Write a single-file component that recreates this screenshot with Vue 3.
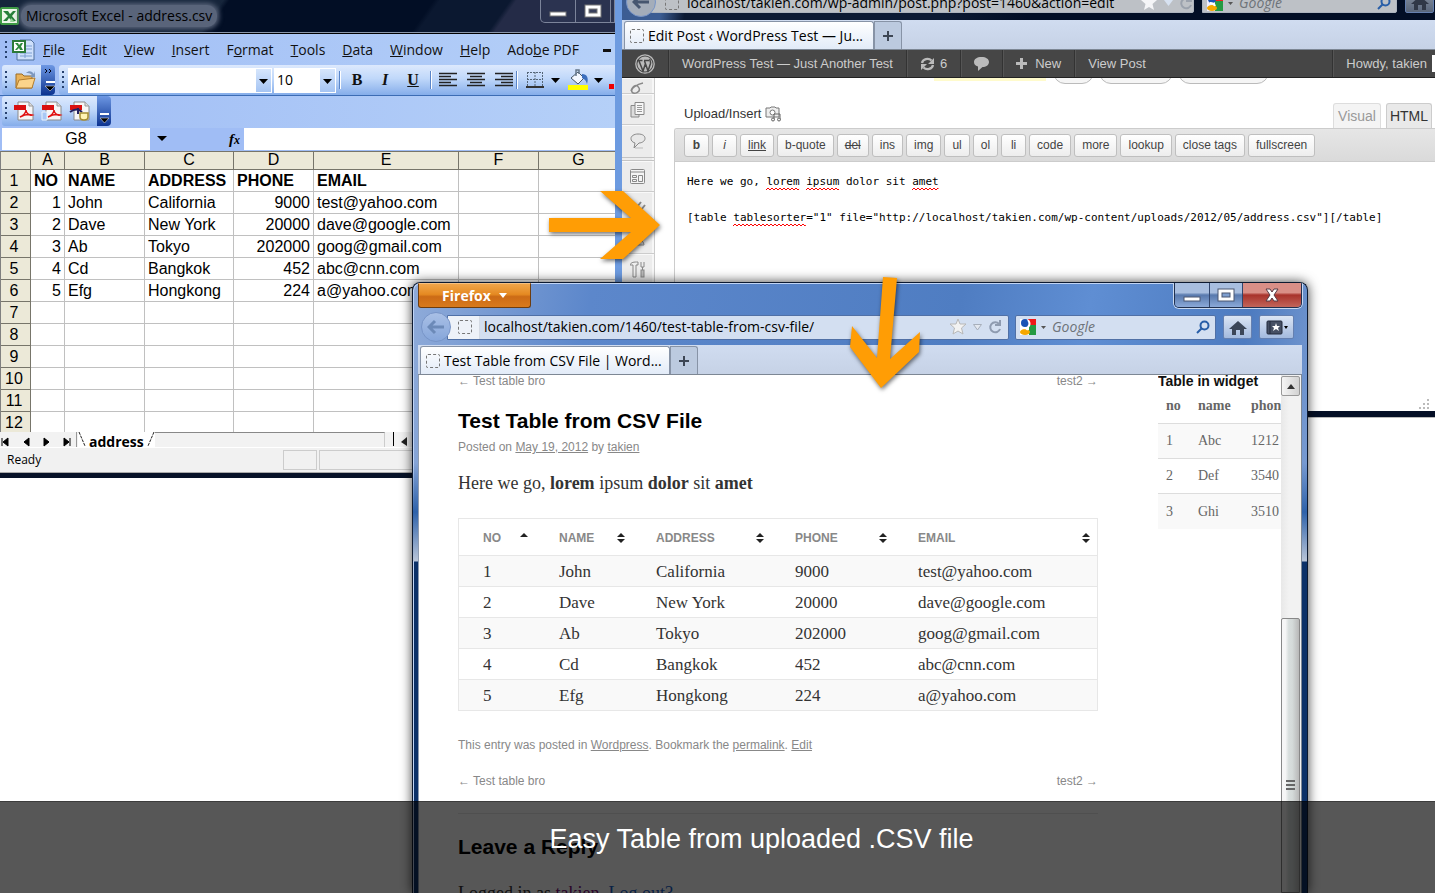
<script setup>
import { ref } from 'vue'

const menus = [
  ['', 'F', 'ile'], ['', 'E', 'dit'], ['', 'V', 'iew'], ['', 'I', 'nsert'], ['F', 'o', 'rmat'],
  ['', 'T', 'ools'], ['', 'D', 'ata'], ['', 'W', 'indow'], ['', 'H', 'elp'], ['Ado', 'b', 'e PDF'],
]
const letters = ['A', 'B', 'C', 'D', 'E', 'F', 'G']
const people = [
  ['1', 'John', 'California', '9000', 'test@yahoo.com'],
  ['2', 'Dave', 'New York', '20000', 'dave@google.com'],
  ['3', 'Ab', 'Tokyo', '202000', 'goog@gmail.com'],
  ['4', 'Cd', 'Bangkok', '452', 'abc@cnn.com'],
  ['5', 'Efg', 'Hongkong', '224', 'a@yahoo.com'],
]
const heads = ['NO', 'NAME', 'ADDRESS', 'PHONE', 'EMAIL']
const sheet = [heads, ...people, [], [], [], [], [], []]
const widget = [['1', 'Abc', '1212'], ['2', 'Def', '3540'], ['3', 'Ghi', '3510']]
const tags = ['b', 'i', 'link', 'b-quote', 'del', 'ins', 'img', 'ul', 'ol', 'li', 'code', 'more', 'lookup', 'close tags', 'fullscreen']

const cell = ref('G8')
const formula = ref('')
const adminUrl = ref('localhost/takien.com/wp-admin/post.php?post=1460&action=edit')
const siteUrl = ref('localhost/takien.com/1460/test-table-from-csv-file/')
const post = ref('Here we go, lorem ipsum dolor sit amet\n\n[table tablesorter="1" file="http://localhost/takien.com/wp-content/uploads/2012/05/address.csv"][/table]')
// Misspelt words in the editor: line, first column, length
const typos = [[0, 12, 5], [0, 18, 5], [0, 34, 4], [2, 7, 11]]
</script>

<template>
  <div class="desktop">
    <div class="back-row">
      <section class="excel" aria-label="Microsoft Excel">
        <header class="xl-title">
          <svg class="xl-logo" width="20" height="20" viewBox="0 0 20 20"><rect x="0" y="1" width="19" height="18" rx="2" fill="#3f9a45" /><rect x="2" y="3" width="15" height="14" fill="#eef7ea" /><path d="M3 5h5l2 3 3-3h3l-4 5 4 5h-4l-3-3-2 3H3l5-5z" fill="#27803a" /><path d="M11 12l4 4h-5z" fill="#9ad49a" /></svg>
          <h2>Microsoft Excel - address.csv</h2>
          <div class="xl-ctl">
            <button aria-label="Minimize Excel"><svg width="18" height="12"><rect x="1" y="7" width="16" height="4" fill="#fff" stroke="#777" /></svg></button>
            <button aria-label="Maximize Excel"><svg width="18" height="14"><rect x="1" y="1" width="16" height="12" fill="#fff" stroke="#777" /><rect x="5" y="5" width="8" height="4" fill="#39405c" stroke="#777" /></svg></button>
            <button aria-label="Close Excel"></button>
          </div>
        </header>
        <nav class="xl-menu">
          <i class="grip"></i>
          <svg width="23" height="22" viewBox="0 0 23 22"><path d="M8 1h11l3 3v17H5V12z" fill="#cfe0fb" stroke="#51719e" /><path d="M14 7h6M14 10h6M8 14h12M8 17h12M13 12v7" stroke="#7d9fd2" /><rect x="1" y="2" width="12" height="11" fill="#fff" stroke="#2c7a3a" stroke-width="2" /><path d="M3 4h3l1 2 2-2h2L9 7.500l2 3.500H8L7 9l-2 2H3l3-3.500z" fill="#2c8a3c" /></svg>
          <button v-for="m in menus" :key="m[2]">{{ m[0] }}<u>{{ m[1] }}</u>{{ m[2] }}</button>
          <button class="xl-dash" aria-label="Minimize workbook"></button>
        </nav>
        <div class="xl-bar">
          <div class="strip">
            <i class="grip"></i>
            <button aria-label="Open"><svg width="24" height="22" viewBox="0 0 24 22"><path d="M2 5h6l2 2h8v12H2z" fill="#e9b35a" stroke="#9b6c24" /><path d="M5 11l16-2-3 10H2z" fill="#fbd48b" stroke="#b27c2c" /><path d="M12 4c3-3 6-2 8 1l1-3v6h-5l2-2c-2-2-4-2-6-2" fill="#7c97bd" /></svg></button>
          </div>
          <div class="cap"><svg width="14" height="28"><path d="M4 4l2 2-2 2M8 4l2 2-2 2" fill="none" stroke="#001" /><path d="M5 17h9" stroke="#fff" stroke-width="2" /><path d="M4 21h10l-5 5z" fill="#000" stroke="#fff" stroke-width=".5" /></svg></div>
          <div class="strip fmt">
            <i class="grip"></i>
            <span class="combo font"><select aria-label="Font"><option>Arial</option></select><svg width="15" height="23"><path d="M3 10h9l-4.500 5z" /></svg></span>
            <span class="combo size"><select aria-label="Font size"><option>10</option></select><svg width="15" height="23"><path d="M3 10h9l-4.500 5z" /></svg></span>
            <i class="sep"></i>
            <button class="biu bold">B</button><button class="biu ital">I</button><button class="biu und">U</button>
            <i class="sep"></i>
            <button class="al" aria-label="Align left"><svg width="18" height="16"><path d="M0 1.500h18M0 4.500h12M0 7.500h18M0 10.500h12M0 13.500h18" stroke="#222" stroke-width="1.500" /></svg></button>
            <button class="al" aria-label="Center"><svg width="18" height="16"><path d="M0 1.500h18M3 4.500h12M0 7.500h18M3 10.500h12M0 13.500h18" stroke="#222" stroke-width="1.500" /></svg></button>
            <button class="al" aria-label="Align right"><svg width="18" height="16"><path d="M0 1.500h18M6 4.500h12M0 7.500h18M6 10.500h12M0 13.500h18" stroke="#222" stroke-width="1.500" /></svg></button>
            <i class="sep"></i>
            <button class="al wide" aria-label="Borders"><svg width="34" height="18"><path d="M1 1.500h16M1 8.500h16M1.500 1v14M9 1v14M16.500 1v14" stroke="#567" stroke-dasharray="2 1" fill="none" /><path d="M0 16h18" stroke="#333" stroke-width="2" /><path d="M25 7h9l-4.500 5z" /></svg></button>
            <button class="al wide" aria-label="Fill color"><svg width="35" height="22"><path d="M3 9l7-6 6 6-6 6z" fill="#f4f8ff" stroke="#456" /><path d="M8 7V1h3v4" fill="none" stroke="#678" stroke-width="1.500" /><path d="M14 5c5 0 7 4 5 10-1-4-3-5-5-6z" fill="#3c6fbd" /><rect y="16" width="20" height="5" fill="#ff0" /><path d="M26 9h9l-4.500 5z" /></svg></button>
            <i class="red"></i>
          </div>
        </div>
        <div class="xl-bar second">
          <div class="strip pdf">
            <i class="grip"></i>
            <button v-for="n in 3" :key="n" :aria-label="'Convert to PDF ' + n"><svg width="22" height="20" viewBox="0 0 22 20"><path d="M5 1h11l4 4v14H5z" fill="#f6f6f6" stroke="#8a8a8a" /><path d="M16 1v4h4" fill="#ddd" stroke="#999" /><rect x="1" y="4" width="12" height="5" fill="#d90f0f" /><template v-if="n < 3"><path d="M7 16c3-1 6-4 6-7 0 3 3 6 6 5-4-1-8 0-12 2z" fill="none" stroke="#e01212" stroke-width="1.500" /><path v-if="n === 2" d="M1 11h5v8H1z" fill="#a9c8f5" stroke="#e9f1fc" /></template><template v-else><path d="M1 11c4-3 8-4 12 0M9 7v6" stroke="#22205e" stroke-width="2" fill="none" /><path d="M11 12h8v4c0 4-8 4-8 0z" fill="#fff4b4" stroke="#a48d30" stroke-width="1.500" /></template></svg></button>
          </div>
          <div class="cap"><svg width="14" height="28"><path d="M3 18h9" stroke="#fff" stroke-width="2" /><path d="M3 22h9l-4.500 5z" fill="#000" stroke="#fff" stroke-width=".5" /></svg></div>
        </div>
        <div class="xl-formula">
          <input v-model="cell" class="namebox" aria-label="Name box">
          <button aria-label="Cell list"><svg width="10" height="6"><path d="M0 0h10L5 5z" /></svg></button>
          <span class="fx">f<small>x</small></span>
          <input v-model="formula" class="fbox" aria-label="Formula">
        </div>
        <div class="sheet">
          <table>
            <colgroup><col class="k0"><col class="k1"><col class="k2"><col class="k3"><col class="k2"><col class="k4"><col class="k2"><col class="k2"></colgroup>
            <thead><tr><th></th><th v-for="l in letters" :key="l">{{ l }}</th></tr></thead>
            <tbody>
              <tr v-for="(r, n) in sheet" :key="n" :class="{ strong: n === 0 }">
                <th>{{ n + 1 }}</th>
                <td v-for="(l, c) in letters" :key="l" :class="{ num: n > 0 && (c === 0 || c === 3) }">{{ r[c] }}</td>
              </tr>
            </tbody>
          </table>
        </div>
        <div class="xl-tabs">
          <svg width="78" height="15"><path d="M2 6v8M3 10l5-4v8zM24 10l5-4v8zM49 10l-5-4v8zM69 10l-5-4v8zM70 6v8" fill="#000" stroke="#000" /><path d="M76.500 0v15" stroke="#999" /></svg>
          <span class="stab"><svg width="8" height="15"><path d="M1 0l6 14" stroke="#222" stroke-dasharray="3 1" /></svg><b>address</b><svg width="8" height="15"><path d="M7 0L1 14" stroke="#222" stroke-dasharray="3 1" /></svg></span>
          <span class="hscroll"></span>
          <svg width="28" height="15"><path d="M8.500 0v14" stroke="#000" /><path d="M16 10l6-5v9z" fill="#222" /></svg>
        </div>
        <footer class="xl-status"><span>Ready</span><i></i><i class="long"></i></footer>
      </section>

      <section class="wp" aria-label="WordPress editor">
        <div class="wp-nav">
          <button class="round" aria-label="Back in editor"><svg width="18" height="16" viewBox="0 0 18 16"><path d="M8 2L2 8l6 6M2 8h15" fill="none" stroke="#46566f" stroke-width="3" /></svg></button>
          <div class="url"><i class="dots"></i><input v-model="adminUrl" aria-label="Editor address"><svg width="52" height="18" viewBox="0 0 52 18"><path d="M8 1l2 5h6l-4.500 4L13 16l-5-3-5 3 1.500-6L0 6h6z" fill="#f4f5f7" /><path d="M23 6h9l-4.500 6z" fill="#d7e2f1" /><path d="M49 6a5 5 0 1 0 1 5M50 2v5h-5" stroke="#9ba2ad" stroke-width="2" fill="none" /></svg></div>
          <div class="search"><svg width="28" height="16" viewBox="0 0 28 16"><rect width="16" height="16" fill="#eef" /><rect x="8" width="8" height="6" fill="#e22" /><rect x="8" y="6" width="8" height="10" fill="#259a42" /><circle cx="5" cy="4" r="4" fill="#1853b5" /><ellipse cx="5" cy="13" rx="5" ry="3" fill="#f5a800" /><path d="M3 8q4 0 5 3" stroke="#fff" fill="none" stroke-width="2" /><path d="M21 7h5l-2.500 3z" fill="#555" /></svg><input placeholder="Google" aria-label="Search in editor"><svg width="14" height="14" viewBox="0 0 14 14"><circle cx="8.500" cy="5.500" r="4" fill="none" stroke="#285ea8" stroke-width="2" /><path d="M6 8l-5 5" stroke="#285ea8" stroke-width="2" /></svg></div>
          <button class="sq" aria-label="Home in editor"><svg width="18" height="15" viewBox="0 0 18 15"><path d="M9 1L0 9h3v6h4v-5h4v5h4V9h3z" fill="#303847" /></svg></button>
        </div>
        <div class="tabs">
          <button class="tab"><i class="dots"></i>Edit Post ‹ WordPress Test — Ju...</button>
          <button class="plus" aria-label="New editor tab"><svg width="12" height="12"><path d="M6 1v10M1 6h10" stroke="#3d4654" stroke-width="2" /></svg></button>
        </div>
        <nav class="adminbar">
          <a href="#" class="logo" aria-label="WordPress"><svg width="20" height="20" viewBox="0 0 20 20"><circle cx="10" cy="10" r="9.200" fill="none" stroke="#bbb" stroke-width="1.300" /><circle cx="10" cy="10" r="7.600" fill="#bbb" /><path d="M2 6.500h5.500M9 6.500h5M4 7l4 10 2.500-7.500M9.500 7l3.500 10 2.500-7.500c.5-2-1.200-3-.5-4.500" fill="none" stroke="#464646" stroke-width="1.500" /></svg></a>
          <a href="#">WordPress Test — Just Another Test</a>
          <a href="#"><svg width="15" height="14" viewBox="0 0 15 14"><path d="M2 6a5.500 5 0 0 1 9.500-2.500M13 8a5.500 5 0 0 1-9.500 2.500" fill="none" stroke="#bbb" stroke-width="2.300" /><path d="M14 1v6H8zM1 13V7h6z" fill="#bbb" /></svg>6</a>
          <a href="#" aria-label="Comments"><svg width="15" height="14" viewBox="0 0 15 14"><path d="M7.500 0C12 0 15 2 15 5s-3 5-6.500 5L4 14V9.500C1 9 0 7 0 5c0-3 3-5 7.500-5z" fill="#bbb" /></svg></a>
          <a href="#" class="new"><svg width="11" height="11"><path d="M5.500 0v11M0 5.500h11" stroke="#bbb" stroke-width="3" /></svg>New</a>
          <a href="#" class="last">View Post</a>
          <a href="#" class="howdy">Howdy, takien<i></i></a>
        </nav>
        <div class="wp-body">
          <aside>
            <a href="#" class="first" aria-label="Links"><svg width="18" height="16" viewBox="0 0 18 16"><path d="M2 12c2-6 6-7 8-3s-5 7-7 4 5-8 11-9" fill="none" stroke="#888" stroke-width="1.500" /></svg></a>
            <a href="#" aria-label="Pages"><svg width="16" height="16"><path d="M1 3.500h8V15H1z" fill="#ddd" stroke="#888" /><path d="M5 .5h9v12H5z" fill="#f7f7f7" stroke="#888" /><path d="M7 3.500h5M7 5.500h5M7 7.500h5M7 9.500h5" stroke="#999" /></svg></a>
            <a href="#" class="gap" aria-label="Comments menu"><svg width="17" height="16"><path d="M8 1c5 0 7 2 7 4.500S12 10 9 10l-5 5 1-5C2 9 1 7.500 1 5.500 1 3 4 1 8 1z" fill="#e8e8e8" stroke="#888" /><path d="M5 15h8" stroke="#bbb" /></svg></a>
            <a href="#" aria-label="Appearance"><svg width="16" height="16"><rect x=".5" y=".5" width="14" height="14" rx="1" fill="#f4f4f4" stroke="#888" /><path d="M1 3h13" stroke="#888" /><path d="M2.500 6.500h4v2h-4zM2.500 10.500h4v2h-4zM8.500 6.500h4v6h-4z" fill="none" stroke="#888" /></svg></a>
            <a href="#" aria-label="Plugins"><svg width="16" height="16"><path d="M2 14l4-4M5 8l5 5M7 7l4-5M11 10l4-5" stroke="#888" stroke-width="2" /></svg></a>
            <a href="#" aria-label="Users"><svg width="16" height="16"><circle cx="8" cy="5" r="3" fill="#ccc" stroke="#888" /><path d="M2 14c0-7 12-7 12 0z" fill="#ddd" stroke="#888" /></svg></a>
            <a href="#" aria-label="Tools"><svg width="16" height="17"><path d="M0 4c1-3 4-3 8-3v3H6v12H3V4z" fill="#eee" stroke="#888" /><path d="M11 1v5h3V1M12.500 6v3" stroke="#888" fill="none" /><rect x="11" y="9" width="3" height="7" fill="#bbb" stroke="#888" /></svg></a>
          </aside>
          <div class="wp-main">
            <div class="cut"><i class="hl"></i><i class="pill p1"></i><i class="pill p2"></i><i class="pill p3"></i></div>
            <div class="upload">
              <a href="#">Upload/Insert<svg width="17" height="16"><path d="M1 2h4l1-1h4l1 1h3v9H1z" fill="#eee" stroke="#777" /><circle cx="7.500" cy="6.500" r="2.500" fill="#fff" stroke="#777" /><path d="M9 14V8h6v6" fill="none" stroke="#666" /><circle cx="8" cy="13.500" r="1.500" fill="#eee" stroke="#666" /><circle cx="14" cy="13.500" r="1.500" fill="#eee" stroke="#666" /></svg></a>
              <button class="vis">Visual</button><button class="html">HTML</button>
            </div>
            <div class="editor">
              <div class="quick"><button v-for="t in tags" :key="t" :class="'t-' + t">{{ t }}</button></div>
              <div class="pad">
                <textarea v-model="post" rows="5" wrap="off" spellcheck="false" aria-label="Post content"></textarea>
                <svg v-for="(t, n) in typos" :key="n" class="typo" height="4" :style="{ left: t[1] + 'ch', top: t[0] * 18 + 14 + 'px', width: t[2] + 'ch' }"><defs><pattern :id="'w' + n" width="4" height="4" patternUnits="userSpaceOnUse"><path d="M0 3l2-2 2 2" fill="none" stroke="#f00" /></pattern></defs><rect width="100%" height="4" :fill="'url(#w' + n + ')'" /></svg>
                <svg class="resize" width="12" height="12"><path d="M8 0h2v2H8zM4 4h2v2H4zM8 4h2v2H8zM0 8h2v2H0zM4 8h2v2H4zM8 8h2v2H8z" fill="#bbb" /></svg>
              </div>
            </div>
          </div>
        </div>
        <div class="wp-edge"></div>
      </section>
    </div>

    <section class="ff" aria-label="Firefox">
      <header class="ff-title">
        <button class="ff-menu">Firefox<svg width="8" height="5"><path d="M0 0h8L4 5z" fill="#fff" /></svg></button>
        <div class="ctl">
          <button aria-label="Minimize"><svg width="18" height="14"><rect x="1" y="9" width="16" height="4" fill="#fff" stroke="#4a5670" /></svg></button>
          <button aria-label="Maximize"><svg width="18" height="14"><rect x="1" y="1" width="16" height="12" fill="#fff" stroke="#4a5670" /><rect x="5" y="5" width="8" height="4" fill="#7fa0d0" stroke="#4a5670" /></svg></button>
          <button class="x" aria-label="Close"><svg width="16" height="14"><path d="M2 1h4l2 3 2-3h4l-4 6 4 6h-4l-2-3-2 3H2l4-6z" fill="#fff" stroke="#553a45" /></svg></button>
        </div>
      </header>
      <div class="ff-nav">
        <button class="round" aria-label="Back"><svg width="18" height="16" viewBox="0 0 18 16"><path d="M8 2L2 8l6 6M2 8h15" fill="none" stroke="#6c8ab8" stroke-width="3" /></svg></button>
        <div class="url"><span class="ident"><i class="dots"></i></span><input v-model="siteUrl" aria-label="Address"><svg width="52" height="18" viewBox="0 0 52 18"><path d="M8 1l2 5h6l-4.500 4L13 16l-5-3-5 3 1.500-6L0 6h6z" fill="#f2f2f2" stroke="#b7b7b7" /><path d="M23.500 6.500h8L27.500 12z" fill="#e3e8f0" stroke="#a7afbb" /><path d="M49 6a5 5 0 1 0 1 5M50 2v5h-5" stroke="#8e9bb0" stroke-width="2" fill="none" /></svg></div>
        <div class="search"><svg width="28" height="16" viewBox="0 0 28 16"><rect width="16" height="16" fill="#fff" /><rect x="8" width="8" height="6" fill="#f01818" /><rect x="9" y="6" width="7" height="10" fill="#259a42" /><circle cx="5" cy="4" r="4" fill="#1853b5" /><ellipse cx="5" cy="13" rx="5" ry="3" fill="#f5a800" /><path d="M3 9q4 0 5 2M8 1q3 4 0 7" stroke="#fff" fill="none" stroke-width="2" /><path d="M21 7h5l-2.500 3z" fill="#555" /></svg><input placeholder="Google" aria-label="Search"><svg width="14" height="14" viewBox="0 0 14 14"><circle cx="8.500" cy="5.500" r="4" fill="none" stroke="#285ea8" stroke-width="2" /><path d="M6 8l-5 5" stroke="#285ea8" stroke-width="2" /></svg></div>
        <button class="sq" aria-label="Home"><svg width="18" height="15" viewBox="0 0 18 15"><path d="M9 1L0 9h3v6h4v-5h4v5h4V9h3z" fill="#3b4658" /></svg></button>
        <button class="sq bm" aria-label="Bookmarks"><svg width="22" height="15" viewBox="0 0 22 15"><rect x="1" y="1" width="15" height="13" rx="1" fill="#465064" stroke="#222b3c" /><path d="M4 1v13" stroke="#222b3c" /><path d="M10 3l1 3h3l-2 2 1 3-3-2-3 2 1-3-2-2h3z" fill="#fff" /><path d="M18 6h4l-2 3z" /></svg></button>
      </div>
      <div class="tabs">
        <button class="tab"><i class="dots"></i>Test Table from CSV File | Word...</button>
        <button class="plus" aria-label="New tab"><svg width="12" height="12"><path d="M6 1v10M1 6h10" stroke="#3d4654" stroke-width="2" /></svg></button>
      </div>
      <div class="page">
        <main>
          <nav class="pn tight"><a href="#">← Test table bro</a><a href="#">test2 →</a></nav>
          <h1>Test Table from CSV File</h1>
          <p class="meta">Posted on <a href="#">May 19, 2012</a> by <a href="#">takien</a></p>
          <p class="body">Here we go, <b>lorem</b> ipsum <b>dolor</b> sit <b>amet</b></p>
          <table class="data">
            <colgroup><col class="d0"><col class="d1"><col class="d2"><col class="d3"><col></colgroup>
            <thead><tr><th v-for="(h, n) in heads" :key="h"><div>{{ h }}<svg width="8" height="10"><path d="M0 4h8L4 0z" fill="#222" /><path v-if="n" d="M0 6h8L4 10z" fill="#222" /></svg></div></th></tr></thead>
            <tbody><tr v-for="p in people" :key="p[0]"><td v-for="v in p" :key="v">{{ v }}</td></tr></tbody>
          </table>
          <p class="meta foot">This entry was posted in <a href="#">Wordpress</a>. Bookmark the <a href="#">permalink</a>. <a href="#">Edit</a></p>
          <nav class="pn"><a href="#">← Test table bro</a><a href="#">test2 →</a></nav>
          <hr>
          <h3>Leave a Reply</h3>
          <p class="body logged">Logged in as <a href="#" class="who">takien</a>. <a href="#">Log out?</a></p>
        </main>
        <aside class="side">
          <h4>Table in widget</h4>
          <table>
            <thead><tr><th>no</th><th>name</th><th>phone</th></tr></thead>
            <tbody><tr v-for="w in widget" :key="w[0]"><td v-for="v in w" :key="v">{{ v }}</td></tr></tbody>
          </table>
        </aside>
        <div class="scroll">
          <button aria-label="Scroll up"><svg width="8" height="5"><path d="M0 5l4-5 4 5z" fill="#333" /></svg></button>
          <div class="thumb"><i></i><i></i><i></i></div>
        </div>
      </div>
    </section>

    <svg class="arrow a1" width="130" height="90" viewBox="540 180 130 90"><path d="M549 218h82l-31-27h23l37 34-37 34h-23l31-27h-82z" fill="#ff9d05" /></svg>
    <svg class="arrow a2" width="90" height="130" viewBox="840 270 90 130"><path d="M883 277l14 1-7 81 30-27-1 20-38 36-31-41 2-21 25 32z" fill="#ff9d05" /></svg>

    <div class="caption"><p>Easy Table from uploaded .CSV file</p></div>
  </div>
</template>

<style>
body { overflow: hidden; }
</style>

<style scoped>
.desktop { position: relative; height: 100vh; overflow: hidden; background: #fff; font-family: "Liberation Sans", Arial, sans-serif; font-size: 12px; }
.desktop * { box-sizing: border-box; }
button, input, select, textarea { font: inherit; color: inherit; border: 0; padding: 0; margin: 0; background: none; border-radius: 0; outline: 0; }
svg { flex: none; display: block; }
h1, h2, h3, h4, p { margin: 0; }
.back-row { display: grid; grid-template-columns: 615px minmax(0, 1fr); align-items: start; }

/* Excel */
.excel { overflow: hidden; border-bottom: 5px solid #071228; background: #a5c1f6; min-width: 0; }
.xl-title { height: 34px; display: flex; align-items: flex-start; background: linear-gradient(125deg, #16253b 0 35%, #020e25 36% 68%, #0b1830 69% 80%, #242b47 81%); border-bottom: 1px solid #000; box-shadow: inset 0 -1px #8a97ac; }
.xl-logo { margin-top: 6px; }
.xl-title h2 { margin: 5px 0 0 1px; padding: 0 5px; border-radius: 10px; background: #59647a; box-shadow: 0 0 5px 2px #59647a; font: 400 14px/22px "Open Sans", sans-serif; color: #000; white-space: nowrap; }
.xl-ctl { margin-left: auto; display: flex; height: 23px; border: 1px solid #7c849a; border-top: 0; border-radius: 0 0 0 5px; background: #2b3350; }
.xl-ctl button { width: 35px; display: grid; place-items: center; border-right: 1px solid #7c849a; }
.xl-ctl button:last-child { width: 3px; border: 0; }
.xl-menu { height: 31px; display: flex; align-items: center; padding-left: 5px; font: 14px/20px "Open Sans", sans-serif; color: #111; background: linear-gradient(90deg, #a0bdf5, #b5d0f8); }
.xl-menu svg { margin: 0 8px 0 5px; }
.xl-menu button { margin-right: 17px; white-space: nowrap; }
.xl-menu .xl-dash { margin: 2px 0 0 7px; width: 8px; height: 3px; background: #111; }
.grip { flex: none; width: 2px; height: 18px; background: repeating-linear-gradient(#27416e 0 2px, transparent 2px 5px); }
.xl-bar { height: 31px; display: flex; padding-left: 2px; background: linear-gradient(90deg, #a0bdf5, #b5d0f8); border-bottom: 1px solid #3c6cb4; }
.xl-bar.second { height: 32px; border-bottom: 0; }
.strip { display: flex; align-items: center; padding-left: 3px; border-radius: 3px 0 0 3px; background: linear-gradient(#dde9fd, #c0d8fa 45%, #85adea); }
.strip > button { display: grid; place-items: center; }
.strip > button:first-of-type { margin-left: 7px; }
.strip:first-child { width: 39px; }
.cap { width: 14px; margin-right: 4px; border-radius: 0 4px 4px 0; background: linear-gradient(#6d97e3, #0c3390); }
.fmt { flex: 1; min-width: 0; overflow: hidden; }
.strip.pdf { width: 95px; }
.pdf > button, .pdf > button:first-of-type { margin-left: 6px; }
.second .cap, .second .strip { height: 30px; }
.combo { flex: none; position: relative; display: flex; height: 25px; border: 1px solid #fff; background: #fff; }
.combo.font { width: 204px; margin-left: 4px; }
.combo.size { width: 62px; margin-left: 2px; }
.combo select { appearance: none; width: 100%; padding-left: 2px; font: 14px/22px "Open Sans", sans-serif; }
.combo svg { position: absolute; right: 0; top: 0; background: linear-gradient(#d6e6fc, #a5c4f3); pointer-events: none; }
.sep { flex: none; width: 2px; height: 18px; margin-left: 3px; border-left: 1px solid #5a85c8; border-right: 1px solid #fff; }
.strip > .biu { width: 28px; font: 700 16px/20px "Liberation Serif", serif; color: #111; }
.strip > .biu:first-of-type { margin-left: 2px; }
.ital { font-style: italic !important; }
.und { text-decoration: underline; }
.al { margin-left: 10px; }
.sep + .al { margin-left: 7px; }
.al.wide { margin-left: 8px; }
.red { flex: none; align-self: flex-end; width: 5px; height: 5px; margin: 0 0 6px 6px; background: #e00; }
.xl-formula { height: 23px; display: flex; padding: 0 0 1px 2px; background: #a0bdf5; }
.namebox { width: 148px; text-align: center; background: #fff !important; font-size: 16px; }
.xl-formula button { width: 24px; display: grid; place-items: center; }
.fx { margin-left: auto; padding-right: 4px; font: italic 700 15px/22px "Liberation Serif", serif; }
.fx small { font-size: 12px; }
.fbox { width: 371px; background: #fff !important; }
.sheet { height: 281px; overflow: hidden; border-left: 1px solid #808080; border-top: 1px solid #77756a; background: #fff; }
.sheet table { table-layout: fixed; width: 618px; border-collapse: separate; border-spacing: 0; font-size: 16px; color: #000; }
.k0 { width: 30px; } .k1 { width: 34px; } .k2 { width: 80px; } .k3 { width: 89px; } .k4 { width: 145px; }
.sheet th, .sheet td { height: 22px; padding: 0 3px; line-height: 21px; white-space: nowrap; border-right: 1px solid #c0c0c0; border-bottom: 1px solid #c0c0c0; text-align: left; }
.sheet th { padding: 0 3px 0 0; font-weight: 400; text-align: center; background: #ece9d8; border-color: #77756a; }
.sheet thead th { height: 18px; line-height: 15px; padding: 0 0 2px; }
.sheet td.num { text-align: right; }
.strong td { font-weight: 700; }
.xl-tabs { height: 15px; display: flex; overflow: hidden; background: #f2f2f2; }
.stab { display: flex; background: #fff; }
.stab b { padding: 0 3px; font: 700 14px/20px "Open Sans", sans-serif; }
.hscroll { width: 230px; border-top: 1px solid #888; border-right: 1px solid #ccc; }
.xl-status { height: 26px; display: flex; align-items: center; padding: 3px 0 3px 7px; background: #f1f1f1; border-top: 1px solid #fff; border-bottom: 1px solid #aaa; font: 12px/18px "Open Sans", sans-serif; }
.xl-status span { width: 276px; }
.xl-status i { width: 34px; height: 20px; border: 1px solid #ccc; }
.xl-status i.long { flex: 1; margin-left: 2px; }

/* Browser chrome shared by both windows */
.tabs { height: 30px; display: flex; align-items: flex-end; padding-left: 2px; background: linear-gradient(#d0dcf0, #c6d2e6); border-bottom: 1px solid #7d8794; font: 14px/24px "Open Sans", sans-serif; color: #000; }
.tab { width: 250px; height: 28px; display: flex; align-items: center; gap: 4px; padding-left: 5px; border: 1px solid #8793a6; border-bottom: 0; border-radius: 3px 3px 0 0; background: linear-gradient(#fff, #e2ebf8); white-space: nowrap; overflow: hidden; }
.plus { width: 28px; height: 28px; display: grid; place-items: center; border: 1px solid #8793a6; border-bottom: 0; border-radius: 0 3px 0 0; background: #bccadf; }
.dots { flex: none; width: 14px; height: 14px; border: 1px dashed #777; border-radius: 2px; }
.round { flex: none; width: 30px; height: 30px; display: grid; place-items: center; border-radius: 50%; background: linear-gradient(#a9c0e6, #86a6da); border: 1px solid #7895c8; z-index: 1; }
.url, .search { display: flex; align-items: center; height: 25px; border: 1px solid #5070a6; border-radius: 0 2px 2px 0; background: #d3dff1; }
.url { flex: 1; min-width: 0; font: 14px/20px "Open Sans", sans-serif; }
.url input { flex: 1; min-width: 0; }
.search { width: 201px; padding: 0 5px 0 4px; font: italic 14px/20px "Open Sans", sans-serif; color: #666; }
.search input { flex: 1; min-width: 0; padding-left: 4px; }
.search input::placeholder { color: #6d7379; opacity: 1; }
.sq { flex: none; width: 29px; height: 24px; display: grid; place-items: center; border: 1px solid #6580b0; border-radius: 2px; background: linear-gradient(#dbe5f4, #a3bade); }

/* WordPress window */
.wp { border-left: 7px solid #6d9be0; min-width: 0; background: #fff; overflow: hidden; }
.wp-nav { height: 20px; display: flex; align-items: flex-end; padding: 0 1px 7px 4px; background: linear-gradient(100deg, #3c5d93 0 5%, #0c1a33 8% 40%, #020e25 50%); }
.wp-nav .round { margin-bottom: -4px; background: #a4adba; }
.wp-nav .url, .wp-nav .search { background: #bdc1c6; border-color: #adb4be; padding-top: 5px; }
.wp-nav .url { margin-left: -5px; padding-left: 13px; }
.wp-nav .url .dots { margin-right: 8px; }
.wp-nav .search { width: 195px; margin: 0 8px; }
.wp-nav .sq { background: linear-gradient(#8e98a6, #59667b); height: 25px; padding-top: 4px; }
.adminbar { height: 28px; display: flex; background: #464646; border-bottom: 1px solid #222; font-size: 13px; color: #ccc; }
.adminbar a { display: flex; align-items: center; gap: 5px; padding: 0 13px; color: inherit; text-decoration: none; white-space: nowrap; border-right: 1px solid #333; box-shadow: inset 1px 0 #555; }
.adminbar .logo { width: 47px; padding: 0 0 0 13px; box-shadow: none; }
.adminbar a.last { border: 0; }
.adminbar .new { gap: 8px; }
.adminbar .howdy { margin-left: auto; padding-right: 0; border-left: 1px solid #333; border-right: 0; }
.howdy i { width: 3px; height: 17px; background: #fff; }
.wp-body { display: flex; height: 333px; overflow: hidden; }
.wp-body > aside { width: 33px; background: #ececec; border-right: 1px solid #ccc; box-shadow: inset -2px 0 #f7f7f7; }
.wp-body > aside a { height: 31px; display: grid; place-items: center; border-top: 1px solid #f9f9f9; border-bottom: 1px solid #ccc; }
.wp-body > aside a.first { height: 16px; }
.wp-body > aside a.gap { height: 36px; padding-bottom: 2px; border-bottom: 4px double #c4c4c4; }
.wp-main { flex: 1; min-width: 0; padding-left: 19px; }
.cut { height: 7px; display: flex; overflow: hidden; padding-left: 260px; }
.hl { width: 112px; height: 3px; margin-right: 7px; background: #fffbcc; }
.pill { height: 24px; margin: -18px 5px 0 0; border: 1px solid #bbb; border-radius: 12px; background: #f5f5f5; }
.p1 { width: 41px; } .p2 { width: 74px; } .p3 { width: 91px; }
.upload { display: flex; align-items: flex-end; height: 43px; padding: 0 3px 0 10px; font-size: 14px; color: #333; }
.upload a { display: flex; gap: 4px; margin: 0 auto 6px 0; font-size: 13px; line-height: 16px; color: #333; text-decoration: none; }
.upload button { height: 25px; border: 1px solid #ccc; border-bottom: 0; border-radius: 3px 3px 0 0; background: #e9e9e9; }
.upload .vis { width: 48px; margin-right: 5px; color: #999; background: #f4f4f4; border-color: #ddd; }
.upload .html { width: 46px; }
.editor { border-left: 1px solid #ccc; border-top: 1px solid #ccc; border-radius: 3px 0 0 0; overflow: hidden; }
.quick { height: 33px; display: flex; align-items: center; gap: 3px; padding: 0 9px; background: linear-gradient(#e6e6e6, #dadada); border-bottom: 1px solid #ccc; }
.quick button { height: 23px; padding: 0 7px; min-width: 25px; border: 1px solid #bfbfbf; border-radius: 3px; background: linear-gradient(#fff, #ededed); color: #444; font-size: 12px; white-space: nowrap; }
.quick .t-b { font-weight: 700; } .quick .t-i { font-style: italic; } .quick .t-link { text-decoration: underline; } .quick .t-del { text-decoration: line-through; }
.pad { position: relative; margin: 11px 0 0 12px; height: 238px; font: 11px/18px "DejaVu Sans Mono", monospace; color: #000; }
.pad textarea { display: block; width: 100%; height: 100%; resize: none; overflow: hidden; line-height: 18px; }
.typo { position: absolute; }
.resize { position: absolute; right: 4px; bottom: 0; }
.wp-edge { height: 7px; background: #040f26; border-bottom: 1px solid #bbb; }

/* Firefox window */
.ff { position: absolute; left: 412px; right: 127px; top: 282px; bottom: 0; display: flex; flex-direction: column; padding: 0 5px; border: 1px solid #0d1a30; border-bottom: 0; border-radius: 8px 8px 0 0; box-shadow: inset 1px 1px #c0d4f4, 0 0 12px rgba(0, 0, 0, .75); overflow: hidden;
  background: linear-gradient(#0000 270px, #b8c4d8 278px, #0c3168 279px), linear-gradient(100deg, #8fabd9 0, #5c87cb 18%, #4f7dc2 55%, #5f8ed3 68%, #4d7bc0 84%, #9db6e0); }
.ff::before { content: ""; position: absolute; inset: 180px 0 auto 0; height: 98px; background: linear-gradient(#4678bd00, #2e62aa 50%, #b9c5d8); }
.ff > * { position: relative; }
.ff-title { height: 30px; display: flex; align-items: flex-start; justify-content: space-between; }
.ff-menu { width: 113px; height: 25px; display: flex; align-items: center; justify-content: center; gap: 8px; font: 700 14px/20px "Open Sans", sans-serif; color: #fff; background: linear-gradient(#f0a54a, #e58a22 45%, #cc6b16 55%, #d87a1d); border: 1px solid #6d3d10; border-top-color: #f5c080; border-radius: 0 0 3px 3px; }
.ctl { display: flex; height: 25px; border: 1px solid #20304f; border-top: 0; border-radius: 0 0 5px 5px; overflow: hidden; box-shadow: 0 0 0 1px #c8d8f0; }
.ctl button { width: 35px; display: grid; place-items: center; border-right: 1px solid #31456c; background: linear-gradient(#a8bedf 40%, #5879ad 50%, #8ba9d8); }
.ctl button + button { width: 33px; }
.ctl .x { width: 58px !important; border: 0; background: linear-gradient(#d98f87 40%, #a8322b 50%, #c2655a) !important; }
.ff-nav { height: 28px; margin-bottom: 4px; padding: 0 8px 0 3px; display: flex; align-items: center; }
.ff-nav .url { margin-left: -4px; padding-right: 6px; }
.ident { display: flex; align-items: center; height: 23px; width: 32px; padding-left: 10px; margin-right: 4px; background: #eef2f8; border-right: 1px solid #d5dbe4; }
.ff-nav .search { margin: 0 7px 0 6px; border-radius: 2px; }
.ff-nav .bm { width: 35px; margin-left: 7px; }
.page { flex: 1; min-height: 0; display: flex; background: #fff; overflow: hidden; border-left: 1px solid #8f9cb0; }
.page main { flex: 1; min-width: 0; padding-left: 39px; }
.pn { display: flex; justify-content: space-between; margin-top: 18px; line-height: 18px; }
.pn.tight { margin: 0; line-height: 12px; }
.pn a, .meta, .meta a { color: #888; }
.pn a { text-decoration: none; }
h1, h3 { font-size: 21px; line-height: 26px; color: #000; }
h1 { margin-top: 21px; }
.meta { margin-top: 4px; line-height: 18px; }
.body { margin-top: 15px; font: 18px/24px "Liberation Serif", serif; color: #333; }
.data { width: 100%; margin-top: 23px; table-layout: fixed; border-collapse: separate; border-spacing: 0; border: 1px solid #e7e7e7; font: 17px/28px "Liberation Serif", serif; color: #333; }
.d0 { width: 76px; } .d1 { width: 97px; } .d2 { width: 139px; } .d3 { width: 123px; }
.data th { height: 37px; padding: 2px 7px 0 24px; border-bottom: 1px solid #e7e7e7; text-align: left; font: 700 12px/18px "Liberation Sans", sans-serif; color: #888; }
.data th div { display: flex; align-items: center; justify-content: space-between; }
.data td { height: 31px; padding: 2px 0 0 24px; border-bottom: 1px solid #e7e7e7; white-space: nowrap; }
.data tbody tr:last-child td { height: 30px; border-bottom: 0; }
.data tbody tr:nth-child(odd), .side tbody tr:nth-child(odd) { background: #f9f9f9; }
.meta.foot { margin-top: 25px; }
.page hr { margin: 23px 0 0; border: 0; border-top: 1px solid #e7e7e7; }
h3 { margin-top: 20px; }
.logged { margin-top: 21px; }
.logged a { color: #1a5fc8; text-decoration: none; }
.logged .who { color: #7a0a7a; }
.side { width: 123px; margin-left: 60px; overflow: hidden; }
.side h4 { font-size: 14px; line-height: 12px; color: #111; white-space: nowrap; }
.side table { width: 160px; table-layout: fixed; border-spacing: 0; font: 14px/18px "Liberation Serif", serif; color: #666; }
.side th { height: 37px; padding: 2px 0 0 8px; text-align: left; border-bottom: 1px solid #ddd; }
.side th:first-child { width: 32px; } .side th:nth-child(2) { width: 53px; }
.side td { height: 35px; padding: 0 0 0 8px; border-bottom: 1px solid #ddd; }
.side tr:last-child td { border-bottom: 0; }
.scroll { width: 21px; display: flex; flex-direction: column; gap: 222px; padding: 1px 1px 0 0; background: linear-gradient(90deg, #e8e8e8, #f2f2f2 40%); border-right: 1px solid #7d8794; }
.scroll button { flex: none; height: 20px; display: grid; place-items: center; border: 1px solid #999; border-radius: 2px; background: linear-gradient(90deg, #f5f5f5, #d2d2d2); }
.thumb { flex: 1; padding-top: 161px; border: 1px solid #888; border-radius: 2px 2px 0 0; background: linear-gradient(90deg, #f6f6f6 20%, #d8dedd 40%, #d5dbda 60%, #b8b8b8); }
.thumb i { display: block; width: 9px; height: 2px; margin: 0 0 2px 4px; background: #666; }

.arrow { position: absolute; filter: drop-shadow(1px 2px 2px rgba(0, 0, 0, .55)); pointer-events: none; }
.a1 { left: 540px; top: 180px; }
.a2 { left: 840px; top: 270px; }
.caption { position: absolute; left: 0; right: 0; bottom: 0; height: 92px; padding: 21px 0 0 88px; background: rgba(0, 0, 0, .66); border-top: 1px solid rgba(0, 0, 0, .3); text-align: center; color: #fff; font-size: 27px; line-height: 32px; }
</style>
